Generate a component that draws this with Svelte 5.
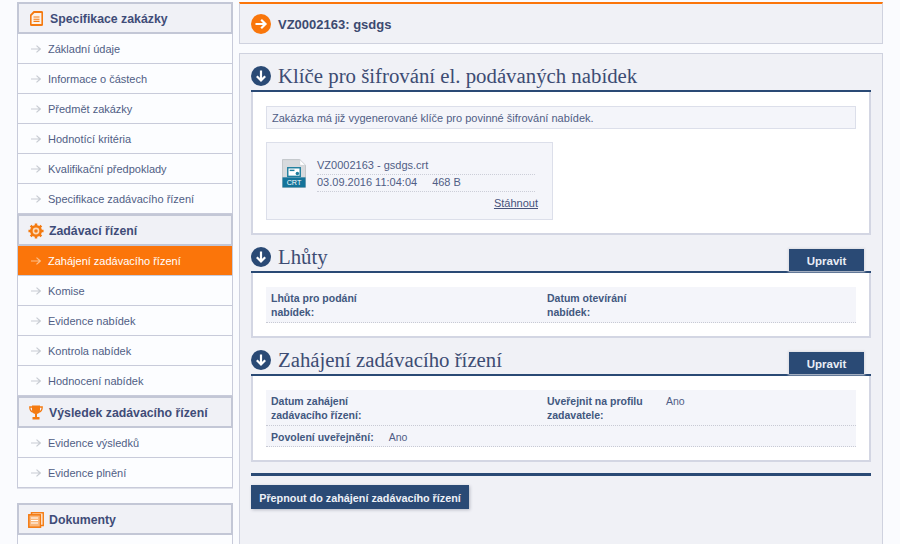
<script>
  const menu = [
    { title: 'Specifikace zakázky', icon: 'doc', items: ['Základní údaje', 'Informace o částech', 'Předmět zakázky', 'Hodnotící kritéria', 'Kvalifikační předpoklady', 'Specifikace zadávacího řízení'] },
    { title: 'Zadávací řízení', icon: 'gear', items: ['Zahájení zadávacího řízení', 'Komise', 'Evidence nabídek', 'Kontrola nabídek', 'Hodnocení nabídek'] },
    { title: 'Výsledek zadávacího řízení', icon: 'cup', items: ['Evidence výsledků', 'Evidence plnění'] }
  ];
  const active = 'Zahájení zadávacího řízení';
</script>

{#snippet icon(name)}
  {#if name === 'doc'}
    <svg class="ico" width="13" height="15" viewBox="0 0 13 15"><path d="M4 1h7.500a.8.800 0 0 1 .8.800v11.400a.8.800 0 0 1-.8.800H1.500a.8.800 0 0 1-.8-.800V4.300z" fill="#fdf3ea" stroke="#f47a10" stroke-width="1.800"/><path d="M3.500 6h6M3.500 8.200h6M3.500 10.400h6" stroke="#f47a10" stroke-width="1.100"/></svg>
  {:else if name === 'gear'}
    <svg class="ico" width="16" height="16" viewBox="0 0 18 18"><circle cx="9" cy="9" r="5.300" fill="#fbd9b8" stroke="#f47a10" stroke-width="3"/><path d="M9 .5v3M9 14.500v3M.5 9h3M14.500 9h3M3 3l2.200 2.200M12.800 12.800 15 15M15 3l-2.200 2.200M5.200 12.800 3 15" stroke="#f47a10" stroke-width="2.800"/><circle cx="9" cy="9" r="2" fill="#f47a10"/></svg>
  {:else if name === 'cup'}
    <svg class="ico cup" width="14" height="15" viewBox="0 0 14 15"><path d="M3 .5h8v4.500a4 4 0 0 1-8 0z" fill="#f47a10"/><path d="M3 2H.8c0 3 1 4.500 3 5M11 2h2.200c0 3-1 4.500-3 5" fill="none" stroke="#f47a10" stroke-width="1.300"/><path d="M6 8.500h2V12H6zM3.500 12h7v2.500h-7z" fill="#f47a10"/></svg>
  {/if}
{/snippet}

{#snippet circle(color)}
  <svg class="circle" width="20" height="20" viewBox="0 0 20 20"><circle cx="10" cy="10" r="10" fill={color}/><path d="M10 4.500v10M5.800 10.200 10 14.500l4.200-4.300" fill="none" stroke="#fff" stroke-width="2.200"/></svg>
{/snippet}

<div class="page">
  <aside class="side">
    {#each menu as group}
      <div class="group">
        <div class="group-head" class:wide={group.icon !== 'doc'}>
          {@render icon(group.icon)}
          <span>{group.title}</span>
        </div>
        {#each group.items as item}
          <div class="item" class:active={item === active}>
            <svg class="arrow" width="10" height="8" viewBox="0 0 10 8"><path d="M0 4h9.300M5.500 .6 9.300 4 5.500 7.400" fill="none" stroke={item === active ? '#fbc08c' : '#c8ccd3'} stroke-width="1.200"/></svg>
            <span>{item}</span>
          </div>
        {/each}
      </div>
    {/each}
    <div class="group docs">
      <div class="group-head wide">
        <svg class="ico" width="16" height="16" viewBox="0 0 16 16"><rect x="3.500" y=".8" width="11.700" height="12.700" fill="#fff" stroke="#f47a10" stroke-width="1.500"/><rect x=".8" y="2.800" width="11.700" height="12.400" fill="#f9b77c" stroke="#f47a10" stroke-width="1.500"/><path d="M3 6h7M3 8.500h7M3 11h7" stroke="#fff" stroke-width="1"/></svg>
        <span>Dokumenty</span>
      </div>
    </div>
  </aside>

  <main class="main">
    <div class="title-bar">
      <svg width="20" height="20" viewBox="0 0 20 20"><circle cx="10" cy="10" r="10" fill="#f9760b"/><path d="M4.500 10h10M10.200 5.800 14.500 10l-4.300 4.200" fill="none" stroke="#fff" stroke-width="2.200"/></svg>
      <strong>VZ0002163: gsdgs</strong>
    </div>

    <div class="content">
      <section>
        <div class="sec-head">
          {@render circle('#2a4a75')}
          <h2>Klíče pro šifrování el. podávaných nabídek</h2>
        </div>
        <div class="box keys">
          <div class="notice">Zakázka má již vygenerované klíče pro povinné šifrování nabídek.</div>
          <div class="file">
            <svg class="crt" width="24" height="29" viewBox="0 0 25 30">
              <path d="M.5 .5h18l6 6V29.500H.5z" fill="#d7dadd" stroke="#c0c4c8"/>
              <path d="M18.500 .5v6h6z" fill="#fff" stroke="#c0c4c8" stroke-width=".5"/>
              <rect x="6" y="9" width="13" height="9" fill="#fff" stroke="#1f7f9f" stroke-width="1.500"/>
              <rect x="8" y="11" width="5" height="1.500" fill="#1f7f9f"/>
              <circle cx="16" cy="15" r="1.800" fill="#1f7f9f"/>
              <rect x=".5" y="19" width="24" height="10.500" fill="#14749a"/>
              <text x="12.500" y="27.500" text-anchor="middle" class="crt-text">CRT</text>
            </svg>
            <div class="file-info">
              <div class="file-row">VZ0002163 - gsdgs.crt</div>
              <div class="file-row"><span>03.09.2016 11:04:04</span><span class="size">468 B</span></div>
              <a href="#top" class="dl">Stáhnout</a>
            </div>
          </div>
        </div>
      </section>

      <section>
        <div class="sec-head">
          {@render circle('#2a4a75')}
          <h2>Lhůty</h2>
          <button class="tab">Upravit</button>
        </div>
        <div class="box">
          <div class="rows">
            <div class="row tall">
              <div class="cell"><b>Lhůta pro podání nabídek:</b></div>
              <div class="cell"><b>Datum otevírání nabídek:</b></div>
            </div>
          </div>
        </div>
      </section>

      <section>
        <div class="sec-head">
          {@render circle('#2a4a75')}
          <h2>Zahájení zadávacího řízení</h2>
          <button class="tab">Upravit</button>
        </div>
        <div class="box">
          <div class="rows">
            <div class="row tall">
              <div class="cell"><b>Datum zahájení zadávacího řízení:</b></div>
              <div class="cell"><b>Uveřejnit na profilu zadavatele:</b><span class="val">Ano</span></div>
            </div>
            <div class="row">
              <div class="cell"><b class="auto">Povolení uveřejnění:</b><span class="val-near">Ano</span></div>
            </div>
          </div>
        </div>
      </section>

      <div class="actions">
        <button class="switch">Přepnout do zahájení zadávacího řízení</button>
      </div>
    </div>
  </main>
</div>

<style>
  :global(body) {
    margin: 0;
    background: #fafbfe;
  }

  .page {
    display: flex;
    gap: 6px;
    height: 544px;
    overflow: hidden;
    padding: 2px 0 0 17px;
    box-sizing: border-box;
    font-family: "Liberation Sans", Arial, sans-serif;
    font-size: 11px;
    color: #505d85;
  }

  .side {
    width: 216px;
    flex: none;
  }

  .group {
    border: 1px solid #c8cbda;
    border-top: 0;
    box-shadow: 0 1px 0 #dfe1ea;
    background: #fcfdff;
  }

  .docs {
    margin-top: 15px;
    height: 60px;
  }

  .group-head {
    height: 32px;
    box-sizing: border-box;
    margin: 0 -1px;
    border: 2px solid #c3c7d6;
    background: #f0f1f6;
    display: flex;
    align-items: center;
    padding: 1px 0 0 11px;
    gap: 7px;
    font-size: 12.300px;
    font-weight: bold;
    color: #3f4c78;
  }

  .group-head.wide {
    padding-left: 9px;
    gap: 5px;
  }

  .ico {
    flex: none;
  }

  .cup {
    margin: 0 1px;
  }

  .item {
    height: 30px;
    box-sizing: border-box;
    border-bottom: 1px solid #c8cbda;
    display: flex;
    align-items: center;
    gap: 7px;
    padding-left: 13px;
  }

  .item:last-child {
    border-bottom: 0;
    height: 29px;
  }

  .item.active {
    background: #fb750a;
    color: #fff;
  }

  .main {
    width: 644px;
    flex: none;
  }

  .title-bar {
    height: 42px;
    box-sizing: border-box;
    border: 1px solid #cfd2df;
    border-top: 2px solid #fb750a;
    background: #f0f1f6;
    display: flex;
    align-items: center;
    gap: 7px;
    padding: 1px 0 0 11px;
    font-size: 13px;
    color: #3c4a70;
  }

  .content {
    margin-top: 9px;
    border: 1px solid #cfd2df;
    background: #f0f1f6;
    padding: 0 11px;
    height: 600px;
    box-sizing: border-box;
  }

  .sec-head {
    display: flex;
    align-items: center;
    gap: 7px;
    height: 38px;
    box-sizing: border-box;
    border-bottom: 2px solid #2a4a75;
    padding-top: 7px;
    position: relative;
  }

  .circle {
    flex: none;
  }

  h2 {
    margin: 0;
    font-family: "Liberation Serif", "Times New Roman", serif;
    font-weight: normal;
    font-size: 20.800px;
    color: #3d4c73;
  }

  .tab {
    position: absolute;
    right: 7px;
    bottom: 0;
    width: 75px;
    height: 22px;
    border: 0;
    padding: 1px 0 0;
    background: #2a4a75;
    color: #e9edf5;
    font: bold 11.500px "Liberation Sans", Arial, sans-serif;
    box-shadow: 0 0 2px 1px #dcdde3;
  }

  .box {
    background: #fff;
    border: 2px solid #d3d6e3;
    border-top: 0;
    padding: 14px 13px 13px;
  }

  .keys {
    height: 143px;
    box-sizing: border-box;
  }

  .notice {
    height: 23px;
    box-sizing: border-box;
    border: 1px solid #dcdfea;
    background: #f4f5fa;
    display: flex;
    align-items: center;
    padding-left: 5px;
  }

  .file {
    margin-top: 13px;
    width: 287px;
    height: 78px;
    box-sizing: border-box;
    border: 1px solid #dcdfea;
    background: #f4f5fa;
    display: flex;
    padding: 16px 14px 0 15px;
    gap: 11px;
  }

  .crt {
    flex: none;
  }

  .crt-text {
    font: 7.500px "Liberation Sans", Arial, sans-serif;
    fill: #fff;
  }

  .file-info {
    flex: 1;
    margin-top: -1px;
  }

  .file-row {
    height: 16px;
    line-height: 15px;
    border-bottom: 1px dotted #ccced8;
    margin-right: 3px;
  }

  .size {
    margin-left: 15px;
  }

  .dl {
    display: block;
    text-align: right;
    margin-top: 5px;
    color: #46527a;
    text-decoration: underline;
  }

  .rows {
    background: #f4f5fa;
  }

  .row {
    display: flex;
    height: 21px;
    align-items: center;
    padding: 1px 0 0 5px;
    border-bottom: 1px dotted #c8cad4;
    box-sizing: border-box;
  }

  .row.tall {
    height: 36px;
    align-items: flex-start;
    padding-top: 4px;
  }

  .cell {
    width: 276px;
    display: flex;
  }

  b {
    display: block;
    width: 118px;
    font-size: 10.500px;
    line-height: 14px;
    color: #42587f;
  }

  b.auto {
    width: auto;
  }

  .val {
    line-height: 14px;
    font-size: 10.500px;
    margin-left: 1px;
  }

  .val-near {
    margin-left: 15px;
    font-size: 10.500px;
    line-height: 14px;
  }

  .actions {
    margin-top: 11px;
    border-top: 3px solid #2a4a75;
    padding-top: 9px;
  }

  .switch {
    display: block;
    width: 218px;
    height: 24px;
    border: 0;
    padding: 1px 0 0;
    background: #2a4a75;
    color: #eef1f7;
    font: bold 10.800px "Liberation Sans", Arial, sans-serif;
    box-shadow: 1px 1px 3px #b9bcc6;
  }
</style>
